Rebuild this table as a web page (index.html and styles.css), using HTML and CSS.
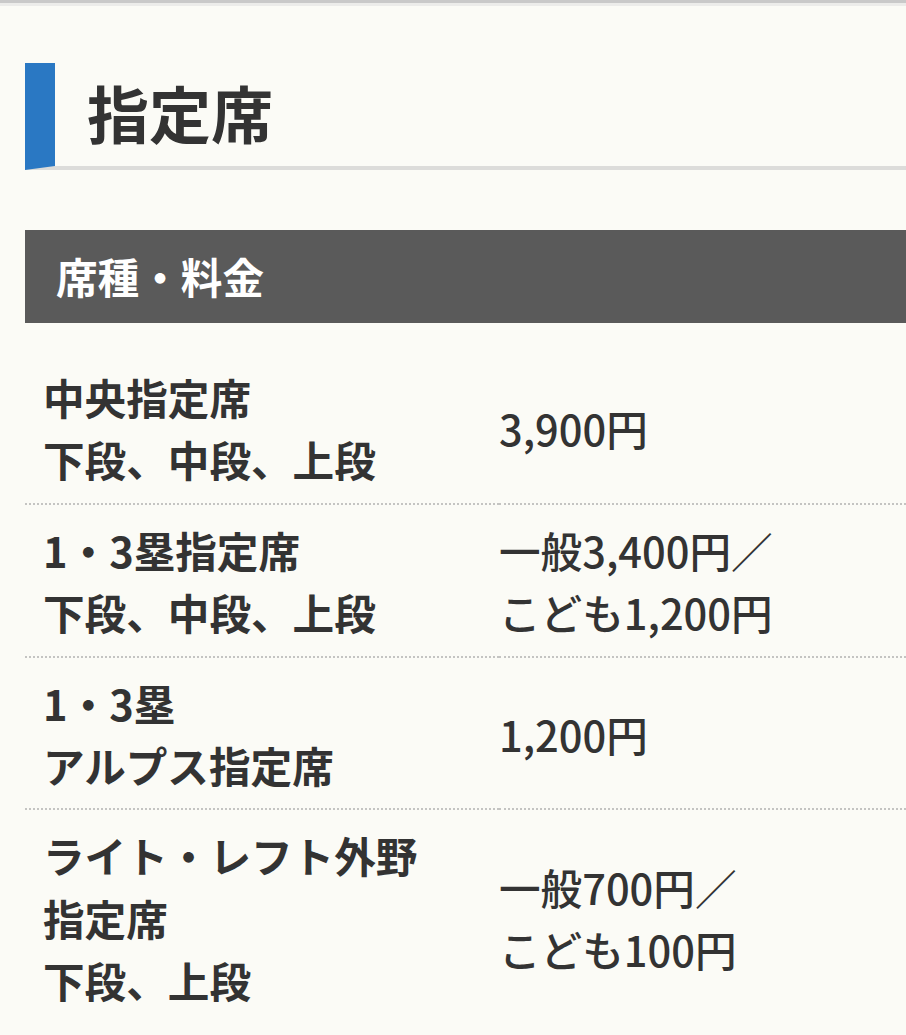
FILE: index.html
```html
<!DOCTYPE html>
<html lang="ja">
<head>
<meta charset="utf-8">
<title>指定席</title>
<link rel="stylesheet" href="styles.css">
</head>
<body>
<div class="topbar"></div>
<main class="content">
  <h2 class="section-title">指定席</h2>
  <div class="table-head">席種・料金</div>
  <table class="price-table">
    <tbody>
      <tr>
        <th>中央指定席<br>下段、中段、上段</th>
        <td>3,900円</td>
      </tr>
      <tr>
        <th>1・3塁指定席<br>下段、中段、上段</th>
        <td>一般3,400円／<br>こども1,200円</td>
      </tr>
      <tr>
        <th>1・3塁<br>アルプス指定席</th>
        <td>1,200円</td>
      </tr>
      <tr class="last">
        <th>ライト・レフト外野<br>指定席<br>下段、上段</th>
        <td>一般700円／<br>こども100円</td>
      </tr>
    </tbody>
  </table>
</main>
</body>
</html>
```

FILE: styles.css
```css
html, body {
  margin: 0;
  padding: 0;
  overflow-x: hidden;
}

body {
  background: #fbfbf6;
  color: #333333;
  font-family: "Noto Sans CJK JP", "Noto Sans", sans-serif;
}

.topbar {
  height: 3px;
  background: #c9c9c9;
  border-bottom: 3px solid #ececea;
}

.content {
  margin: 57px -40px 0 25px;
}

.section-title {
  margin: 0;
  border-left: 30px solid #2a78c3;
  border-bottom: 4px solid #dcdcda;
  padding: 16px 0 21px 32px;
  font-size: 62px;
  line-height: 66px;
  font-weight: 700;
  color: #333333;
}

.table-head {
  margin-top: 60px;
  background: #5a5a5a;
  color: #ffffff;
  font-size: 41.6px;
  font-weight: 700;
  line-height: 93px;
  height: 93px;
  padding-left: 31px;
}

.price-table {
  margin-top: 29px;
  width: 100%;
  border-collapse: collapse;
  font-size: 41.6px;
  line-height: 62.4px;
}

.price-table th,
.price-table td {
  padding: 14px 0 12px 0;
  text-align: left;
  vertical-align: middle;
  border-bottom: 2px dotted #c4c4c2;
}

.price-table .last th,
.price-table .last td {
  border-bottom: none;
}

.price-table th {
  width: 456px;
  padding-left: 18px;
  font-weight: 700;
}

.price-table td {
  font-weight: 500;
}
```
